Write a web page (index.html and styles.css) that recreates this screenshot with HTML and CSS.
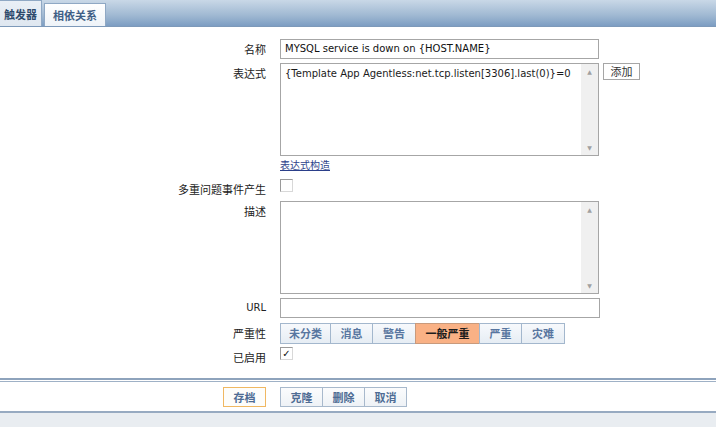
FILE: index.html
```html
<!DOCTYPE html>
<html>
<head>
<meta charset="utf-8">
<link rel="stylesheet" href="styles.css">
</head>
<body>
<div class="tabbar">
  <div class="tab active">触发器</div>
  <div class="tab">相依关系</div>
</div>
<div class="form">
  <div class="row r-name">
    <div class="label">名称</div>
    <div class="field"><div class="input">MYSQL service is down on {HOST.NAME}</div></div>
  </div>
  <div class="row r-expr">
    <div class="label">表达式</div>
    <div class="field fx">
      <div class="textarea">
        <div class="ta-text">{Template App Agentless:net.tcp.listen[3306].last(0)}=0</div>
        <div class="scroll"><span class="up">&#9650;</span><span class="down">&#9660;</span></div>
      </div>
      <div class="addbtn">添加</div>
    </div>
  </div>
  <div class="row r-link">
    <div class="label"></div>
    <div class="field"><a class="link" href="#">表达式构造</a></div>
  </div>
  <div class="row r-multi">
    <div class="label">多重问题事件产生</div>
    <div class="field"><div class="checkbox"></div></div>
  </div>
  <div class="row r-desc">
    <div class="label">描述</div>
    <div class="field">
      <div class="textarea tall">
        <div class="ta-text"></div>
        <div class="scroll"><span class="up">&#9650;</span><span class="down">&#9660;</span></div>
      </div>
    </div>
  </div>
  <div class="row r-url">
    <div class="label">URL</div>
    <div class="field"><div class="input url"></div></div>
  </div>
  <div class="row r-sev">
    <div class="label">严重性</div>
    <div class="field">
      <div class="sev">
        <div class="sbtn w49">未分类</div>
        <div class="sbtn w42">消息</div>
        <div class="sbtn w43">警告</div>
        <div class="sbtn w64 on">一般严重</div>
        <div class="sbtn w42">严重</div>
        <div class="sbtn w43">灾难</div>
      </div>
    </div>
  </div>
  <div class="row r-en">
    <div class="label">已启用</div>
    <div class="field"><div class="checkbox checked">&#10003;</div></div>
  </div>
</div>
<div class="footer">
  <div class="actions">
    <div class="btn save">存档</div>
    <div class="group">
      <div class="btn">克隆</div>
      <div class="btn">删除</div>
      <div class="btn">取消</div>
    </div>
  </div>
</div>
<div class="bottom"></div>
</body>
</html>
```
FILE: styles.css
```css
html, body {
  margin: 0;
  padding: 0;
  background: #ffffff;
  font-family: "DejaVu Sans", "Noto Sans CJK SC", sans-serif;
  font-size: 11px;
  color: #1a1a1a;
}
.tabbar {
  height: 26px;
  background: linear-gradient(#c9d8e7, #9fb8d2 60%, #7c9dc2);
  display: flex;
  align-items: flex-end;
  gap: 2px;
  border-bottom: 1px solid #7d99b9;
}
.tab {
  height: 23px;
  line-height: 23px;
  padding: 0;
  font-family: "Noto Sans CJK SC", sans-serif;
  font-size: 11px;
  font-weight: bold;
  color: #3f5f86;
  background: linear-gradient(#ffffff, #eef3f8);
  border: 1px solid #8fa8c4;
  border-bottom: none;
  box-sizing: border-box;
  width: 62px;
  text-align: center;
  white-space: nowrap;
}
.tab.active {
  width: 42px;
  height: 26px;
  line-height: 26px;
  border-left: none;
  background: linear-gradient(#e9eff6, #dfe7f0);
  color: #2d4a6c;
}
.form {
  padding-top: 12px;
  display: flex;
  flex-direction: column;
}
.row {
  display: grid;
  grid-template-columns: 266px 1fr;
  column-gap: 14px;
}
.label {
  text-align: right;
  font-family: "Noto Sans CJK SC", sans-serif;
  font-size: 11px;
  color: #222;
  line-height: 20px;
}
.r-url .label { font-family: "DejaVu Sans", sans-serif; font-size: 10px; }
.input {
  width: 319px;
  height: 20px;
  box-sizing: border-box;
  border: 1px solid #a6a6a6;
  padding: 0 4px;
  line-height: 18px;
  font-size: 10px;
  color: #111;
  white-space: nowrap;
}
.input.url { width: 320px; }
.r-expr { margin-top: 4px; }
.fx { display: flex; gap: 4px; align-items: flex-start; }
.textarea {
  width: 319px;
  height: 93px;
  box-sizing: border-box;
  border: 1px solid #a6a6a6;
  display: flex;
}
.ta-text {
  flex: 1;
  padding: 2px 4px;
  font-size: 10px;
  line-height: 15px;
  white-space: nowrap;
  overflow: hidden;
}
.scroll {
  width: 17px;
  background: #f0f0f0;
  display: flex;
  flex-direction: column;
  justify-content: space-between;
  align-items: center;
  font-size: 6px;
  color: #a0a0a0;
  padding: 4px 0;
}
.addbtn {
  width: 37px;
  height: 17px;
  box-sizing: border-box;
  border: 1px solid #a6a6a6;
  font-family: "Noto Sans CJK SC", sans-serif;
  font-size: 11px;
  line-height: 15px;
  text-align: center;
  color: #333;
  background: #fff;
}
.r-link { margin-top: 2px; height: 14px; }
.link {
  font-family: "Noto Sans CJK SC", sans-serif;
  font-size: 10px;
  line-height: 14px;
  color: #2b3f8a;
  text-decoration: underline;
}
.r-multi { margin-top: 7px; height: 16px; }
.r-multi .label { line-height: 16px; margin-top: 2px; }
.checkbox {
  width: 13px;
  height: 13px;
  box-sizing: border-box;
  border: 1px solid #9a9a9a;
  border-right-color: #d8d8d8;
  border-bottom-color: #d8d8d8;
  background: #fff;
  font-size: 10px;
  line-height: 11px;
  text-align: center;
  color: #111;
}
.r-desc { margin-top: 6px; }
.r-desc .label { line-height: 20px; }
.textarea.tall { height: 93px; }
.r-url { margin-top: 4px; }
.r-sev { margin-top: 5px; }
.r-sev .label { line-height: 20px; }
.sev { display: flex; }
.sbtn {
  height: 21px;
  box-sizing: border-box;
  border: 1px solid #a3b7cd;
  margin-right: -1px;
  background: linear-gradient(#f7f9fc, #e6edf4);
  font-family: "Noto Sans CJK SC", sans-serif;
  font-size: 11px;
  font-weight: bold;
  color: #5876a0;
  text-align: center;
  line-height: 19px;
}
.sbtn.on {
  background: #f9b185;
  border-color: #c89a7c;
  color: #1c1c1c;
}
.w49 { width: 51px; }
.w42 { width: 43px; }
.w43 { width: 44px; }
.w64 { width: 65px; }
.r-en { margin-top: 3px; height: 14px; }
.r-en .label { line-height: 20px; }
.footer {
  margin-top: 17px;
  border-top: 2px solid #8ea3bc;
  height: 31px;
  border-bottom: 2px solid #97aac1;
}
.footer::before {
  content: "";
  display: block;
  height: 1px;
  background: #9fb1c6;
  margin-top: 1px;
}
.actions {
  display: flex;
  padding-left: 223px;
  padding-top: 5px;
  gap: 14px;
}
.btn {
  height: 20px;
  width: 43px;
  box-sizing: border-box;
  border: 1px solid #a8b9cc;
  background: linear-gradient(#fbfcfd, #eef2f6);
  font-family: "Noto Sans CJK SC", sans-serif;
  font-size: 11px;
  font-weight: bold;
  color: #4e6c94;
  text-align: center;
  line-height: 18px;
}
.btn.save { border-color: #f0b862; background: #fdfdfb; }
.group { display: flex; }
.group .btn { margin-right: -1px; }
.bottom {
  height: 17px;
  background: #e9edf1;
}
```
